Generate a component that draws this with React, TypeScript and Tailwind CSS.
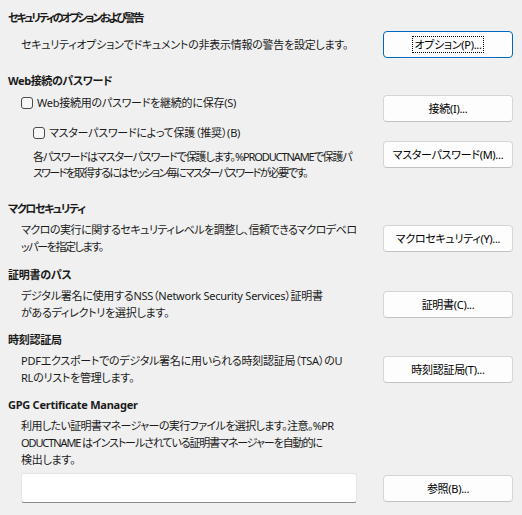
import React from "react";

const Btn = ({ label, focused = false }: { label: string; focused?: boolean }) => (
  <button
    className={
      "flex h-[27px] w-[130px] shrink-0 items-center justify-center whitespace-nowrap rounded-[4px] border bg-[#fdfdfd] text-[11px] tracking-[-0.3px] text-black " +
      (focused ? "border-[#0067c0]" : "border-[#d5d5d5] border-b-[#c2c2c2]")
    }
  >
    {focused ? <span className="border border-dotted border-black px-[1px] leading-[15px]">{label}</span> : label}
  </button>
);

const Check = ({ label }: { label: string }) => (
  <label className="flex h-[17px] items-center gap-[4px]">
    <span className="h-[12px] w-[12px] rounded-[3px] border border-[#4a4a4a] bg-[#f7f7f7]" />
    <span>{label}</span>
  </label>
);

const Heading = ({ children, className = "" }: { children: React.ReactNode; className?: string }) => (
  <h2 className={"h-[17px] whitespace-nowrap pl-[8px] text-[11px] font-bold leading-[17px] " + className}>{children}</h2>
);

export default function App() {
  return (
    <div className="h-[515px] w-[522px] overflow-hidden bg-[#f0f0f0] font-['Noto_Sans','Noto_Sans_CJK_JP',sans-serif] text-[11px] leading-[17px] tracking-[-0.25px] text-[#1a1a1a] [font-feature-settings:'palt']">
      <Heading className="mt-[9px] tracking-[-2.2px]">セキュリティのオプションおよび警告</Heading>
      <div className="mt-[5px] flex h-[27px] items-center">
        <p className="ml-[21px] w-[362px] whitespace-nowrap">セキュリティオプションでドキュメントの非表示情報の警告を設定します。</p>
        <Btn label="オプション(P)..." focused />
      </div>

      <Heading className="mt-[14px] tracking-[-0.4px]">Web接続のパスワード</Heading>
      <div className="mt-[5px] flex">
        <div className="w-[383px]">
          <div className="ml-[21px]">
            <Check label="Web接続用のパスワードを継続的に保存(S)" />
          </div>
          <div className="ml-[33px] mt-[13px]">
            <Check label="マスターパスワードによって保護（推奨）(B)" />
          </div>
          <p className="ml-[33px] mt-[8px] whitespace-nowrap leading-[16px]">
            <span className="block tracking-[-1.1px]">各パスワードはマスターパスワードで保護します。%PRODUCTNAMEで保護パ</span>
            <span className="block tracking-[-1.65px]">スワードを取得するにはセッション毎にマスターパスワードが必要です。</span>
          </p>
        </div>
        <div className="flex flex-col gap-[19px] pt-[1px]">
          <Btn label="接続(I)..." />
          <Btn label="マスターパスワード(M)..." />
        </div>
      </div>

      <Heading className="mt-[19px] tracking-[-1.4px]">マクロセキュリティ</Heading>
      <div className="mt-[4px] flex items-center">
        <p className="ml-[21px] w-[362px] whitespace-nowrap">
          <span className="block tracking-[-0.5px]">マクロの実行に関するセキュリティレベルを調整し、信頼できるマクロデベロ</span>
          <span className="block tracking-[-1.4px]">ッパーを指定します。</span>
        </p>
        <Btn label="マクロセキュリティ(Y)..." />
      </div>

      <Heading className="mt-[11px]">証明書のパス</Heading>
      <div className="mt-[4px] flex items-center">
        <p className="ml-[21px] w-[362px] whitespace-nowrap">
          デジタル署名に使用するNSS（Network Security Services）証明書
          <br />
          があるディレクトリを選択します。
        </p>
        <Btn label="証明書(C)..." />
      </div>

      <Heading className="mt-[10px]">時刻認証局</Heading>
      <div className="mt-[4px] flex items-center">
        <p className="ml-[21px] w-[362px] whitespace-nowrap">
          PDFエクスポートでのデジタル署名に用いられる時刻認証局（TSA）のU
          <br />
          RLのリストを管理します。
        </p>
        <Btn label="時刻認証局(T)..." />
      </div>

      <Heading className="mt-[10px]">GPG Certificate Manager</Heading>
      <p className="ml-[21px] mt-[4px] whitespace-nowrap">
        <span className="block tracking-[-0.6px]">利用したい証明書マネージャーの実行ファイルを選択します。注意。%PR</span>
        <span className="block tracking-[-1.1px]">ODUCTNAME はインストールされている証明書マネージャーを自動的に</span>
        <span className="block">検出します。</span>
      </p>
      <div className="mt-[5px] flex items-center">
        <input
          className="ml-[21px] h-[30px] w-[336px] rounded-[3px] border border-[#e5e5e5] border-b-[#8a8a8a] bg-white px-[6px] text-[12px] outline-none"
          defaultValue=""
        />
        <div className="ml-[26px]">
          <Btn label="参照(B)..." />
        </div>
      </div>
    </div>
  );
}
